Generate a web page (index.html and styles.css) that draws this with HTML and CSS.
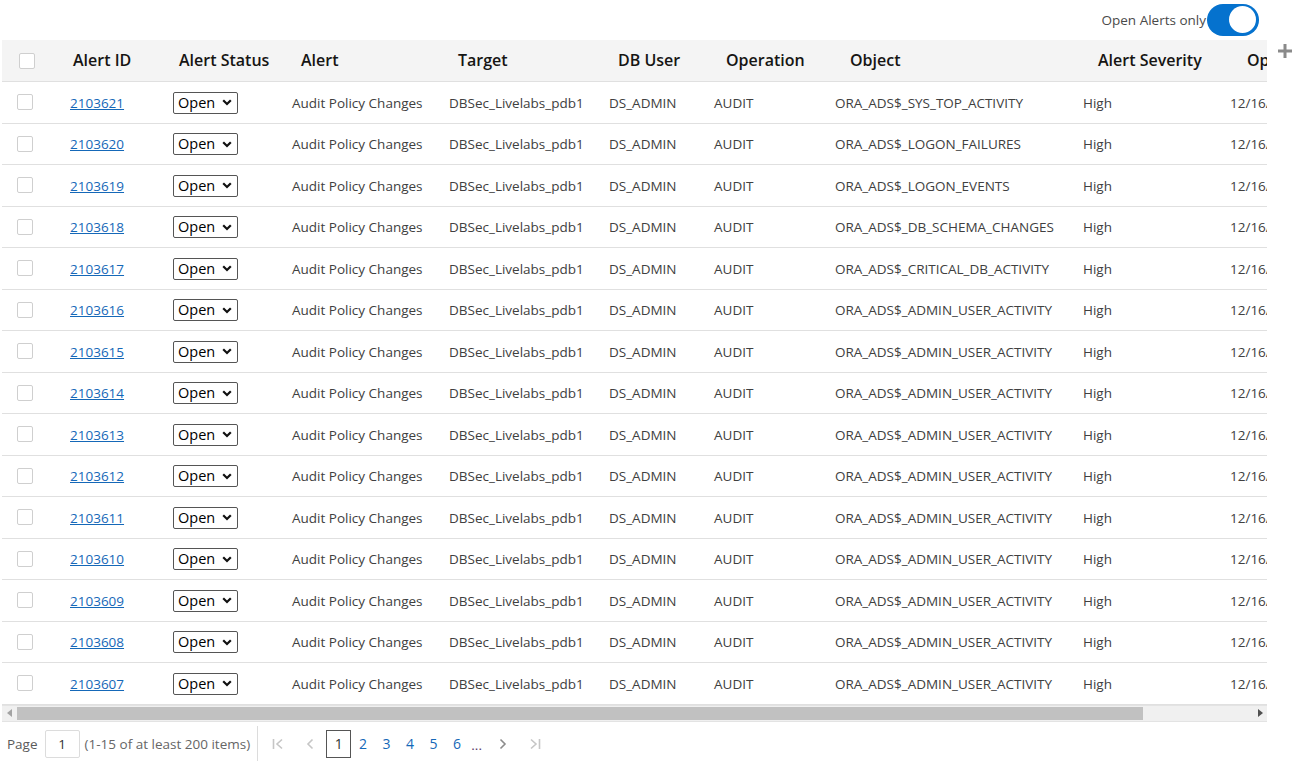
FILE: index.html
```html
<!DOCTYPE html>
<html lang="en">
<head>
<meta charset="utf-8">
<title>Alerts</title>
<link rel="stylesheet" href="styles.css">
</head>
<body>
<div class="page">
  <div class="toolbar">
    <span class="toggle-label">Open Alerts only</span>
    <span class="switch"><span class="knob"></span></span>
  </div>

  <div class="main">
    <div class="grid">
      <div class="thead">
        <div class="th th-chk"><span class="chk"></span></div>
        <div class="th">Alert ID</div>
        <div class="th">Alert Status</div>
        <div class="th">Alert</div>
        <div class="th">Target</div>
        <div class="th">DB User</div>
        <div class="th">Operation</div>
        <div class="th">Object</div>
        <div class="th">Alert Severity</div>
        <div class="th">Operation Time</div>
      </div>
      <div id="rows"></div>
    </div>
    <div class="add">
      <svg width="16" height="16" viewBox="0 0 16 16"><path d="M8 1v14M1 8h14" stroke="#8a8a8a" stroke-width="3"/></svg>
    </div>
  </div>

  <div class="hscroll">
    <span class="arrow">
      <svg width="6" height="8" viewBox="0 0 6 8"><path d="M5 0v8L0 4z" fill="#a3a3a3"/></svg>
    </span>
    <div class="track"><div class="thumb"></div></div>
    <span class="arrow">
      <svg width="6" height="8" viewBox="0 0 6 8"><path d="M1 0v8l5-4z" fill="#505050"/></svg>
    </span>
  </div>

  <div class="pager">
    <span class="pg-label">Page</span>
    <span class="pg-input">1</span>
    <span class="pg-info">(1-15 of at least 200 items)</span>
    <span class="pg-sep"></span>
    <span class="pg-nav first">
      <svg width="12" height="12" viewBox="0 0 12 12"><path d="M1.5 1v10M10 1.5L5 6l5 4.5" stroke="#c6c6c6" stroke-width="1.6" fill="none"/></svg>
    </span>
    <span class="pg-nav prev">
      <svg width="8" height="12" viewBox="0 0 8 12"><path d="M6.5 1.5L2 6l4.5 4.5" stroke="#c6c6c6" stroke-width="1.6" fill="none"/></svg>
    </span>
    <span class="pg-num current">1</span>
    <span class="pg-num">2</span>
    <span class="pg-num">3</span>
    <span class="pg-num">4</span>
    <span class="pg-num">5</span>
    <span class="pg-num">6</span>
    <span class="pg-dots">...</span>
    <span class="pg-nav next">
      <svg width="8" height="12" viewBox="0 0 8 12"><path d="M1.5 1.5L6 6l-4.5 4.5" stroke="#8c8c8c" stroke-width="1.6" fill="none"/></svg>
    </span>
    <span class="pg-nav last">
      <svg width="12" height="12" viewBox="0 0 12 12"><path d="M2 1.5L7 6l-5 4.5M10.5 1v10" stroke="#c6c6c6" stroke-width="1.6" fill="none"/></svg>
    </span>
  </div>
</div>
<script src="app.js"></script>
</body>
</html>
```

FILE: app.js
```js
(function () {
  var objects = [
    "ORA_ADS$_SYS_TOP_ACTIVITY",
    "ORA_ADS$_LOGON_FAILURES",
    "ORA_ADS$_LOGON_EVENTS",
    "ORA_ADS$_DB_SCHEMA_CHANGES",
    "ORA_ADS$_CRITICAL_DB_ACTIVITY"
  ];
  var chev = '<svg width="10" height="7" viewBox="0 0 10 7"><path d="M1.2 1.2L5 5l3.8-3.8" stroke="#111" stroke-width="2.2" fill="none"/></svg>';
  var html = "";
  for (var i = 0; i < 15; i++) {
    var id = 2103621 - i;
    var obj = i < objects.length ? objects[i] : "ORA_ADS$_ADMIN_USER_ACTIVITY";
    html +=
      '<div class="tr">' +
      '<div class="td td-chk"><span class="chk"></span></div>' +
      '<div class="td"><a class="link" href="#">' + id + '</a></div>' +
      '<div class="td"><span class="select"><span>Open</span>' + chev + '</span></div>' +
      '<div class="td">Audit Policy Changes</div>' +
      '<div class="td">DBSec_Livelabs_pdb1</div>' +
      '<div class="td">DS_ADMIN</div>' +
      '<div class="td">AUDIT</div>' +
      '<div class="td">' + obj + '</div>' +
      '<div class="td">High</div>' +
      '<div class="td">12/16/2020 10:15:32 AM</div>' +
      '</div>';
  }
  document.getElementById("rows").innerHTML = html;
})();
```

FILE: styles.css
```css
* { box-sizing: border-box; }
html, body { margin: 0; padding: 0; background: #fff; }
body {
  font-family: "Open Sans", "Noto Sans", sans-serif;
  font-size: 13.5px;
  color: #404040;
}
.page { padding-left: 2px; width: 1300px; height: 765px; overflow: hidden; }

.toolbar {
  height: 40px;
  display: flex;
  justify-content: flex-end;
  align-items: center;
  padding-right: 41px;
  padding-bottom: 1px;
}
.toggle-label { font-size: 13.5px; color: #4a4a4a; margin-right: 1px; }
.switch {
  width: 52px; height: 32px;
  border-radius: 16px;
  background: #0572ce;
  display: flex; align-items: center; justify-content: flex-end;
  padding-right: 3px;
}
.knob { width: 27px; height: 27px; border-radius: 50%; background: #fff; }

.main { display: flex; }
.grid { width: 1265px; overflow: hidden; }
.add { width: 33px; display: flex; justify-content: center; padding-top: 3px; padding-left: 2px; }

.thead {
  display: grid;
  grid-template-columns: 59px 106px 122px 157px 160px 108px 124px 248px 149px 160px;
  width: 1393px;
  height: 42px;
  background: #f4f4f4;
  border-bottom: 1px solid #e0e0e0;
  align-items: center;
}
.th {
  padding-left: 12px;
  font-size: 16px;
  font-weight: 600;
  color: #161513;
  white-space: nowrap;
  padding-bottom: 2px;
}
.th-chk { padding-left: 17px; padding-top: 2px; }

.tr {
  display: grid;
  grid-template-columns: 56px 103px 119px 157px 160px 105px 121px 248px 147px 160px;
  width: 1393px;
  height: 41.5px;
  border-bottom: 1px solid #e0e0e0;
  align-items: center;
}
.td { padding-left: 12px; white-space: nowrap; line-height: 18px; padding-top: 1px; }
.td-chk { padding-left: 15px; padding-top: 0; }

.chk {
  display: block;
  width: 16px; height: 16px;
  border: 1px solid #cfcfcf;
  border-radius: 2px;
  background: #fff;
}
.link { color: #1568b8; text-decoration: underline; }

.select {
  display: flex;
  align-items: center;
  justify-content: space-between;
  width: 65px; height: 22px;
  border: 1px solid #555;
  border-radius: 2px;
  padding: 0 4px 0 4px;
  font-size: 14.5px;
  color: #000;
}
.select svg { margin-right: 1px; }

.hscroll {
  width: 1265px;
  height: 17px;
  background: #f0f0f0;
  border-top: 1px solid #e3e3e3;
  border-bottom: 1px solid #e3e3e3;
  display: flex;
  align-items: center;
}
.arrow { width: 15px; display: flex; justify-content: center; }
.track { flex: 1; height: 13px; }
.thumb { width: 1126px; height: 13px; background: #c1c1c1; }

.pager {
  height: 44px;
  display: flex;
  align-items: center;
  padding-left: 5px;
  color: #5a5a5a;
  font-size: 13.5px;
}
.pg-label { margin-right: 7px; }
.pg-input {
  width: 35px; height: 28px;
  border: 1px solid #dcdcdc;
  border-radius: 2px;
  display: flex; align-items: center; justify-content: center;
  color: #333;
  margin-right: 5px;
}
.pg-info { color: #666; margin-right: 7px; }
.pg-sep { width: 1px; height: 35px; background: #dcdcdc; margin-right: 6px; }
.pg-nav { display: flex; align-items: center; justify-content: center; width: 28px; height: 28px; }
.first { margin-right: 4px; }
.prev { margin-right: 2px; }
.pg-num {
  width: 23.5px; height: 28px;
  display: flex; align-items: center; justify-content: center;
  color: #1568b8;
  font-size: 14px;
}
.pg-num.current { width: 25px; border: 1px solid #555; color: #333; }
.pg-dots { color: #5a3a6a; width: 16px; text-align: center; padding-top: 2px; }
.next { margin-left: 4px; }
.last { margin-left: 4px; }
```
